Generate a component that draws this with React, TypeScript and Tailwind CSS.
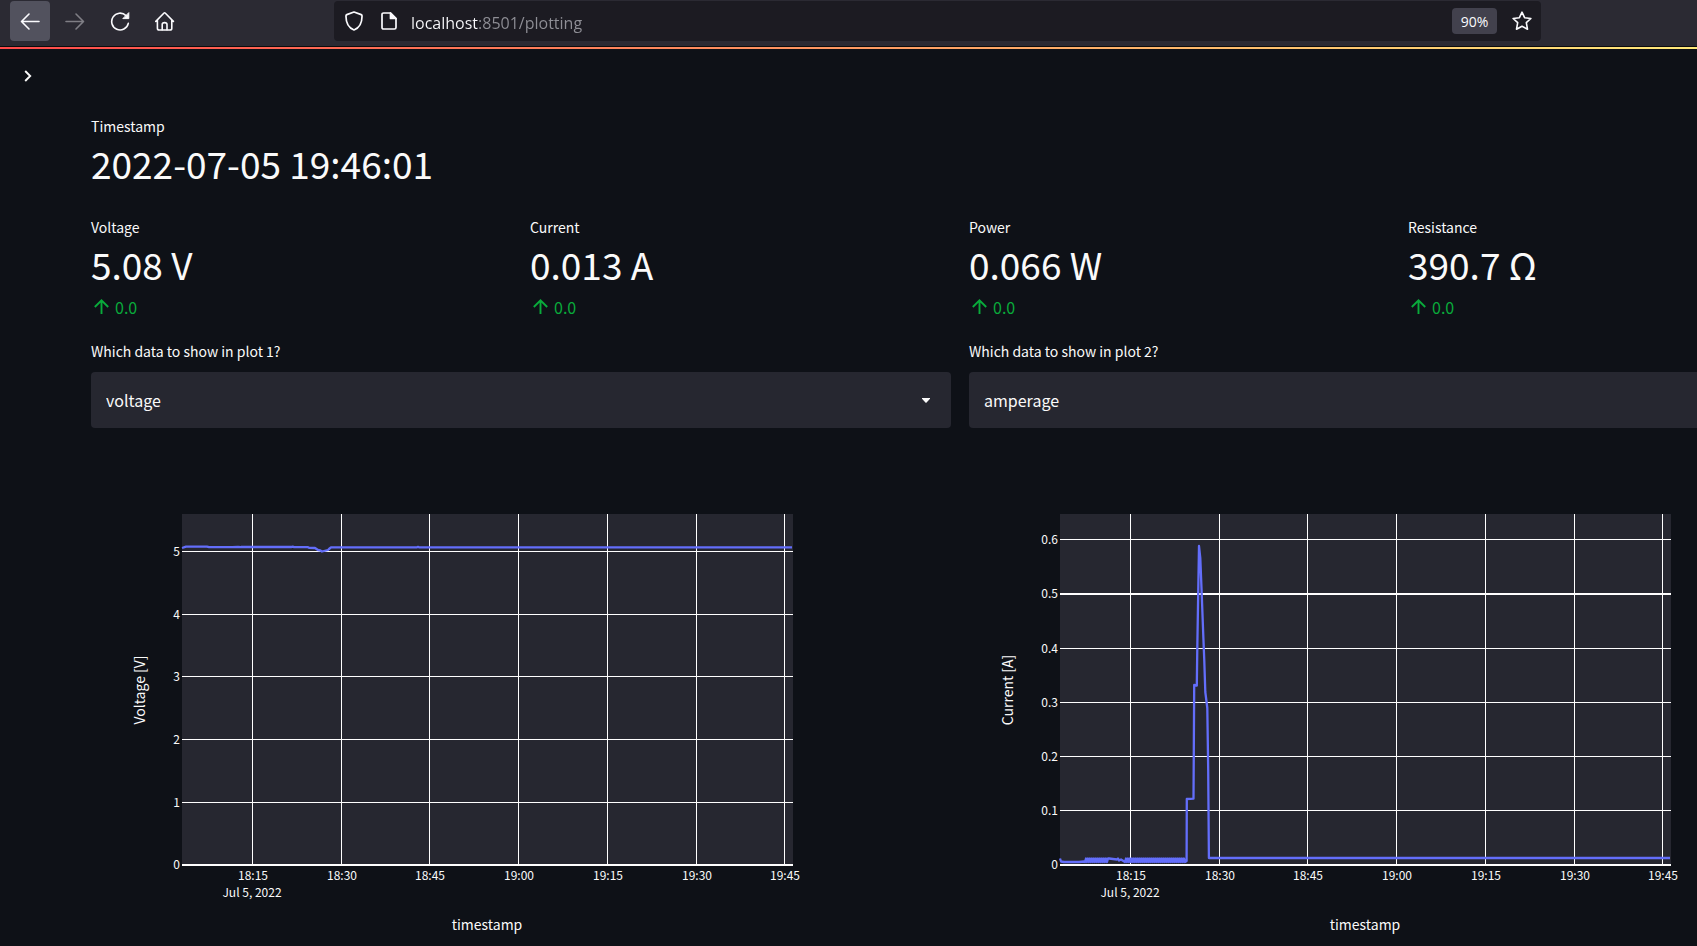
import type { ReactNode } from "react";

type Point = [number, number];

const timeTicks = [
  { x: 161, label: "18:15" },
  { x: 250, label: "18:30" },
  { x: 338, label: "18:45" },
  { x: 427, label: "19:00" },
  { x: 516, label: "19:15" },
  { x: 605, label: "19:30" },
  { x: 693, label: "19:45" },
];

function jitter(from: number, to: number, low: number, high: number): Point[] {
  const points: Point[] = [];
  for (let x = from; x < to; x += 1) {
    points.push([x, x % 2 === 0 ? low : high]);
  }
  return points;
}

const voltageLine: Point[] = [
  [91, 102], [95, 100.7], [116, 100.7], [118, 101.2], [141, 101.2], [147, 100.8],
  ...jitter(150, 202, 101.2, 100.7),
  [203, 101], [217, 101.2], [218, 101.8], [224, 102], [227, 104], [229, 104.3], [231, 105.5],
  [233, 105], [237, 104], [238, 103], [240, 101.3], [326, 101.3], [327, 100.9], [328, 101.3],
  [701, 101.3],
];

const currentLine: Point[] = [
  [91, 412.5], [92, 415.5], [95, 416], [110, 416], [115, 415.5],
  ...jitter(116, 140, 416, 412.5),
  [140, 412.5], [148, 413.5], [149, 412.5], [150, 414.5], [152, 413.5],
  ...jitter(156, 217, 416, 412.5),
  [217.6, 415], [217.8, 353], [224.5, 352.7], [225.2, 239], [227.8, 239.5], [228.3, 202],
  [229.2, 148], [230, 100], [231.3, 112], [232.8, 150], [234.3, 190], [235.3, 215], [236.3, 246],
  [238.3, 262], [239.2, 324], [239.9, 412], [701, 412],
];

interface ChartProps {
  title: string;
  titleX: number;
  rows: { y: number; label: string; bold?: boolean }[];
  line: Point[];
}

function Chart({ title, titleX, rows, line }: ChartProps) {
  return (
    <svg
      viewBox="0 0 860 500"
      className="mt-[18px] block h-auto w-full fill-[#fafafa] text-xs"
      role="img"
      aria-label={`${title} over time`}
    >
      <rect x="91" y="68" width="611" height="351" fill="#262730" />
      <g fill="#ffffff">
        {timeTicks.map((t) => (
          <rect key={t.label} x={t.x} y="68" width="1" height="351" />
        ))}
        {rows.map((r) => (
          <rect key={r.label} x="91" y={r.y} width="611" height={r.bold ? 2 : 1} />
        ))}
      </g>
      <polyline
        points={line.map((p) => p.join(",")).join(" ")}
        fill="none"
        stroke="#636efa"
        strokeWidth="2.3"
        strokeLinejoin="round"
      />
      {rows.map((r) => (
        <text key={r.label} x="89" y={r.y + 5} textAnchor="end">
          {r.label}
        </text>
      ))}
      {timeTicks.map((t) => (
        <text key={t.label} x={t.x + 1} y="434" textAnchor="middle">
          {t.label}
        </text>
      ))}
      <text x="161" y="451" textAnchor="middle">
        Jul 5, 2022
      </text>
      <text x="396" y="484" textAnchor="middle" className="text-sm">
        timestamp
      </text>
      <text transform={`translate(${titleX} 244) rotate(-90)`} textAnchor="middle" className="text-sm">
        {title}
      </text>
    </svg>
  );
}

function Metric({ label, value, delta }: { label: string; value: string; delta?: string }) {
  return (
    <div>
      <div className="text-sm leading-5">{label}</div>
      <div className="text-[37px] leading-[54px]">{value}</div>
      {delta && (
        <div className="mt-1 flex items-center gap-1 pl-[2px] text-base leading-6 text-[#09ab3b]">
          <svg viewBox="0 0 18 18" className="size-[18px]" fill="none" stroke="currentColor" strokeWidth="1.9">
            <path d="M8.5 16V2.5M1.8 9 8.5 2.3 15.2 9" />
          </svg>
          <span>{delta}</span>
        </div>
      )}
    </div>
  );
}

function PlotSelect({ id, label, value }: { id: string; label: string; value: string }) {
  return (
    <div>
      <label htmlFor={id} className="block text-sm leading-5">
        {label}
      </label>
      <div className="relative mt-[11px]">
        <select
          id={id}
          defaultValue={value}
          className="block h-14 w-full appearance-none rounded bg-[#262730] px-[15px] text-base outline-none"
        >
          <option>voltage</option>
          <option>amperage</option>
          <option>power</option>
          <option>resistance</option>
        </select>
        <svg viewBox="0 0 8 5" className="pointer-events-none absolute top-[26px] right-[21px] h-[5px] w-2" fill="#fafafa">
          <path d="M0 0H8V.8L4.6 4.4Q4 5 3.4 4.4L0 .8Z" />
        </svg>
      </div>
    </div>
  );
}

function ToolButton({ label, active, children }: { label: string; active?: boolean; children: ReactNode }) {
  return (
    <button
      type="button"
      aria-label={label}
      className={`flex size-10 items-center justify-center rounded ${active ? "bg-[#52525e]" : ""}`}
    >
      <svg viewBox="0 0 20 20" className="size-5" fill="none" stroke="#fbfbfe" strokeWidth="1.6" strokeLinecap="round" strokeLinejoin="round">
        {children}
      </svg>
    </button>
  );
}

function BrowserBar() {
  return (
    <header className="flex h-[47px] items-start border-b border-[#0c0c0d] bg-[#2b2a33] pt-px pl-[10px] font-['Open_Sans',sans-serif]">
      <nav className="flex gap-[5px]" aria-label="Browser">
        <ToolButton label="Back" active>
          <path d="M19 10.5H2M9 3 1.5 10.5 9 18" />
        </ToolButton>
        <ToolButton label="Forward">
          <path d="M1 10.5H18M11 3 18.5 10.5 11 18" stroke="#7f7e85" />
        </ToolButton>
        <ToolButton label="Reload">
          <path d="M18.3 12.4A8.4 8.4 0 1 1 16 4.6" />
          <path d="M18.8 2V7.6H13.2Z" fill="#fbfbfe" strokeWidth="1" />
        </ToolButton>
        <ToolButton label="Home">
          <path d="M.8 10.4 8.8 2.2Q9.6 1.4 10.4 2.2L18.4 10.4M2.4 9V17.2Q2.4 19 4.2 19H15Q16.8 19 16.8 17.2V9" />
          <path d="M7.2 18.8V13.6Q7.2 11.6 9.6 11.6Q12 11.6 12 13.6V18.8" />
        </ToolButton>
      </nav>
      <div className="mr-[156px] ml-[149px] flex h-10 flex-1 items-center rounded bg-[#1c1b22] pr-[9px] pl-[11px]">
        <svg viewBox="0 0 18 20" className="h-5 w-[18px]" fill="none" stroke="#fbfbfe" strokeWidth="1.7" strokeLinejoin="round">
          <path d="M9 1 16.2 3.6Q17 3.9 17 4.8C17.2 12 14 17 9 19C4 17 .8 12 1 4.8Q1 3.9 1.8 3.6Z" />
        </svg>
        <svg viewBox="0 0 16 18" className="ml-[18px] h-[18px] w-4" fill="none" stroke="#fbfbfe" strokeWidth="1.7" strokeLinejoin="round">
          <path d="M2.6 1H9.5L15 6.5V15.4Q15 17 13.4 17H2.6Q1 17 1 15.4V2.6Q1 1 2.6 1Z" />
          <path d="M9.5 1V6.5H15Z" fill="#fbfbfe" />
        </svg>
        <input
          type="text"
          aria-label="Address"
          defaultValue="localhost:8501/plotting"
          className="ml-[14px] h-8 min-w-0 flex-1 bg-[linear-gradient(90deg,#fbfbfe_68px,#8f8f96_68px)] bg-clip-text pt-[3px] text-base text-transparent outline-none"
        />
        <button type="button" className="h-[26px] w-[45px] rounded bg-[#42414d] pt-px text-center text-sm text-[#fbfbfe]">
          90%
        </button>
        <button type="button" aria-label="Bookmark" className="ml-[15px]">
          <svg viewBox="0 0 20 20" className="size-5" fill="none" stroke="#fbfbfe" strokeWidth="1.6" strokeLinejoin="round">
            <path d="M10 1.2 12.6 6.7 18.9 7.5 14.3 11.7 15.5 18.2 10 15.2 4.5 18.2 5.7 11.7 1.1 7.5 7.4 6.7Z" />
          </svg>
        </button>
      </div>
    </header>
  );
}

const voltageRows = [
  { y: 105, label: "5" },
  { y: 168, label: "4" },
  { y: 230, label: "3" },
  { y: 293, label: "2" },
  { y: 356, label: "1" },
  { y: 418, label: "0", bold: true },
];

const currentRows = [
  { y: 93, label: "0.6" },
  { y: 147, label: "0.5", bold: true },
  { y: 202, label: "0.4" },
  { y: 256, label: "0.3" },
  { y: 310, label: "0.2" },
  { y: 364, label: "0.1" },
  { y: 418, label: "0", bold: true },
];

export default function App() {
  return (
    <div className="min-h-screen overflow-hidden bg-[#0e1117] font-['Noto_Sans_CJK_JP',sans-serif] text-[#fafafa]">
      <BrowserBar />
      <div className="-mr-[223px] h-0.5 bg-linear-to-r/srgb from-[#ff4b4b] to-[#fffd80]" />
      <button type="button" aria-label="Open sidebar" className="mt-[18px] ml-[19px] flex size-[18px] items-center justify-center">
        <svg viewBox="0 0 8 12" className="h-3 w-2" fill="none" stroke="#fafafa" strokeWidth="1.9">
          <path d="M1.2 1 6.2 6 1.2 11" />
        </svg>
      </button>
      <main className="-mr-[132px] pt-[31px] pl-[91px]">
        <Metric label="Timestamp" value="2022-07-05 19:46:01" />
        <div className="mt-[27px] grid grid-cols-4 gap-[18px]">
          <Metric label="Voltage" value="5.08 V" delta="0.0" />
          <Metric label="Current" value="0.013 A" delta="0.0" />
          <Metric label="Power" value="0.066 W" delta="0.0" />
          <Metric label="Resistance" value="390.7 Ω" delta="0.0" />
        </div>
        <div className="mt-[22px] grid grid-cols-2 gap-[18px]">
          <section>
            <PlotSelect id="plot-1" label="Which data to show in plot 1?" value="voltage" />
            <Chart title="Voltage [V]" titleX={54} rows={voltageRows} line={voltageLine} />
          </section>
          <section>
            <PlotSelect id="plot-2" label="Which data to show in plot 2?" value="amperage" />
            <Chart title="Current [A]" titleX={44} rows={currentRows} line={currentLine} />
          </section>
        </div>
      </main>
    </div>
  );
}
